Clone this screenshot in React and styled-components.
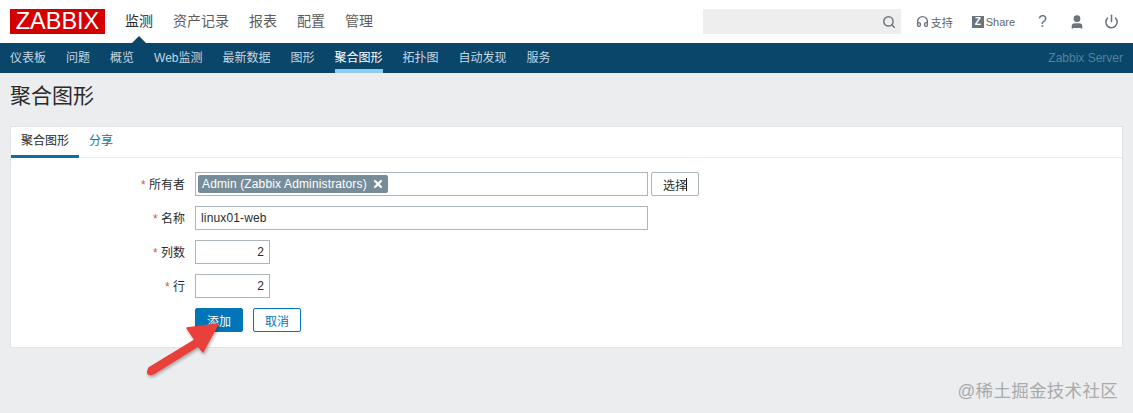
import React from 'react'
import styled, { createGlobalStyle } from 'styled-components'
import { Search, Headphones, User, Power, X } from 'lucide-react'

const cjk = `"Liberation Sans", "Noto Sans CJK SC", sans-serif`

const mainItems = ['监测', '资产记录', '报表', '配置', '管理']
const subItems = ['仪表板', '问题', '概览', 'Web监测', '最新数据', '图形', '聚合图形', '拓扑图', '自动发现', '服务']

const App = () => {
    return (
    <Page>
        <GlobalStyle />
        <TopBar>
            <Logo>ZABBIX</Logo>
            <MainNav>
                {mainItems.map((item, i) => <MainLink key={item} $active={i === 0}>{item}</MainLink>)}
            </MainNav>
            <SearchBox>
                <Search size={14} color="#6f7a80" strokeWidth={2.6} />
            </SearchBox>
            <TopLink $left={15}><Headphones size={13} color="#68757c" strokeWidth={2.6} />支持</TopLink>
            <TopLink $left={19}><ShareMark>Z</ShareMark>Share</TopLink>
            <IconSlot $left={23} $color="#68757c">?</IconSlot>
            <IconSlot $left={22}><User size={16} color="#68757c" fill="#68757c" /></IconSlot>
            <IconSlot $left={19}><Power size={15} color="#68757c" strokeWidth={2.4} /></IconSlot>
        </TopBar>
        <SubBar>
            {subItems.map(item => <SubLink key={item} $active={item === '聚合图形'}>{item}</SubLink>)}
            <ServerName>Zabbix Server</ServerName>
        </SubBar>
        <Heading>聚合图形</Heading>
        <Card>
            <Tabs>
                <Tab $active>聚合图形</Tab>
                <Tab>分享</Tab>
            </Tabs>
            <Form>
                <Row>
                    <Label><Star>*</Star> 所有者</Label>
                    <MultiSelect>
                        <Tag>Admin (Zabbix Administrators)<X size={12} color="#fff" strokeWidth={4.5} /></Tag>
                    </MultiSelect>
                    <SelectButton>选择<Caret /></SelectButton>
                </Row>
                <Row>
                    <Label><Star>*</Star> 名称</Label>
                    <TextField>linux01-web</TextField>
                </Row>
                <Row>
                    <Label><Star>*</Star> 列数</Label>
                    <NumberField>2</NumberField>
                </Row>
                <Row>
                    <Label><Star>*</Star> 行</Label>
                    <NumberField>2</NumberField>
                </Row>
                <Row>
                    <Label />
                    <AddButton>添加</AddButton>
                    <CancelButton>取消</CancelButton>
                </Row>
            </Form>
        </Card>
        <Arrow width="90" height="70" viewBox="0 0 90 70">
            <defs>
                <filter id="arrowShadow" x="-20%" y="-20%" width="150%" height="150%">
                    <feDropShadow dx="1" dy="2" stdDeviation="1.5" floodColor="#000" floodOpacity="0.3" />
                </filter>
            </defs>
            <path d="M7 50 L53 22 L45 10 L76 6 L61 34 L56 28 L11 56 Q3 58 7 50 Z" fill="#e8403a" stroke="#e8403a" strokeWidth="1.5" strokeLinejoin="round" filter="url(#arrowShadow)" />
        </Arrow>
        <Watermark>@稀土掘金技术社区</Watermark>
    </Page>
    )
}

export default App

const GlobalStyle = createGlobalStyle`
    html, body {
        margin: 0;
        padding: 0;
        background: #ebedef;
    }
    body {
        font-family: ${cjk};
    }
`

const Page = styled.div`
    position: relative;
    width: 1133px;
    height: 413px;
    overflow: hidden;
    background: #ebedef;
`

const TopBar = styled.div`
    display: flex;
    align-items: center;
    height: 43px;
    padding: 0 14px 0 10px;
    box-sizing: border-box;
    background: #fff;
`

const Logo = styled.div`
    width: 95px;
    height: 25px;
    box-sizing: border-box;
    background: #d40000;
    color: #fff;
    font-size: 23.5px;
    line-height: 25px;
    text-align: center;
`

const MainNav = styled.nav`
    display: flex;
    gap: 20px;
    margin-left: 20px;
    flex: 1;
`

const MainLink = styled.span`
    position: relative;
    font-size: 14px;
    line-height: 43px;
    color: ${p => (p.$active ? '#2b2b2b' : '#5c5c5c')};
    ${p => p.$active && `
        &::after {
            content: '';
            position: absolute;
            left: 50%;
            bottom: 0;
            margin-left: -7px;
            border: 7px solid transparent;
            border-top: 0;
            border-bottom-color: #0a466a;
        }
    `}
`

const SearchBox = styled.div`
    display: flex;
    align-items: center;
    justify-content: flex-end;
    width: 198px;
    height: 25px;
    padding-right: 5px;
    box-sizing: border-box;
    background: #eeeeee;
`

const TopLink = styled.span`
    display: flex;
    align-items: center;
    gap: 2px;
    margin-left: ${p => p.$left}px;
    font-size: 11px;
    color: #5c666b;
`

const ShareMark = styled.span`
    display: inline-block;
    width: 12px;
    height: 12px;
    background: #68757c;
    color: #fff;
    font-size: 10px;
    font-weight: bold;
    line-height: 12px;
    text-align: center;
`

const IconSlot = styled.span`
    display: flex;
    align-items: center;
    margin-left: ${p => p.$left}px;
    font-size: 16px;
    color: ${p => p.$color || 'inherit'};
`

const SubBar = styled.div`
    display: flex;
    gap: 20px;
    height: 30px;
    padding: 0 10px;
    box-sizing: border-box;
    background: #0a466a;
`

const SubLink = styled.span`
    height: 30px;
    box-sizing: border-box;
    font-size: 12px;
    line-height: 30px;
    color: ${p => (p.$active ? '#ffffff' : '#c4d6e2')};
    border-bottom: ${p => (p.$active ? '4px solid #8fcdee' : 'none')};
`

const ServerName = styled.span`
    margin-left: auto;
    font-size: 12px;
    line-height: 30px;
    color: #54829f;
`

const Heading = styled.h1`
    margin: 0;
    padding: 0 10px;
    height: 53px;
    font-size: 21px;
    font-weight: normal;
    line-height: 46px;
    color: #2b2b2b;
`

const Card = styled.div`
    width: 1113px;
    height: 222px;
    margin-left: 10px;
    box-sizing: border-box;
    background: #fff;
    border: 1px solid #dfe4e7;
`

const Tabs = styled.div`
    display: flex;
    height: 31px;
    box-sizing: border-box;
    border-bottom: 1px solid #ebedef;
`

const Tab = styled.div`
    height: 31px;
    padding: 0 10px;
    box-sizing: border-box;
    font-size: 12px;
    line-height: 28px;
    color: ${p => (p.$active ? '#2b2b2b' : '#0b7a9e')};
    border-bottom: ${p => (p.$active ? '3px solid #0b6ea6' : 'none')};
`

const Form = styled.div`
    display: flex;
    flex-direction: column;
    gap: 10px;
    padding-top: 14px;
`

const Row = styled.div`
    display: flex;
    align-items: center;
    gap: 3px;
    height: 24px;
`

const Label = styled.label`
    width: 174px;
    margin-right: 7px;
    padding-bottom: 2px;
    font-size: 12px;
    text-align: right;
    color: #2b2b2b;
`

const Star = styled.span`
    color: #d9534f;
`

const fieldBorder = '1px solid #acb5b9'

const MultiSelect = styled.div`
    display: flex;
    align-items: center;
    width: 453px;
    height: 24px;
    padding-left: 2px;
    box-sizing: border-box;
    border: ${fieldBorder};
    background: #fff;
`

const Tag = styled.span`
    display: flex;
    align-items: center;
    gap: 5px;
    height: 18px;
    padding: 0 4px;
    border-radius: 2px;
    background: #768d99;
    color: #fff;
    font-size: 12px;
    letter-spacing: 0.14px;
`

const SelectButton = styled.button`
    position: relative;
    width: 48px;
    height: 24px;
    padding: 0;
    box-sizing: border-box;
    font-family: ${cjk};
    font-size: 12px;
    color: #2b2b2b;
    background: #fff;
    border: ${fieldBorder};
    border-radius: 2px;
`

const Caret = styled.span`
    position: absolute;
    top: 5px;
    right: 11px;
    width: 1px;
    height: 13px;
    background: #1f1f1f;
`

const TextField = styled.div`
    width: 453px;
    height: 24px;
    padding: 0 5px;
    box-sizing: border-box;
    font-size: 12px;
    line-height: 22px;
    letter-spacing: 0.15px;
    color: #2b2b2b;
    border: ${fieldBorder};
`

const NumberField = styled(TextField)`
    width: 75px;
    text-align: right;
`

const AddButton = styled.button`
    width: 48px;
    height: 24px;
    padding: 0;
    font-family: ${cjk};
    font-size: 12px;
    color: #fff;
    background: #0275b8;
    border: 1px solid #0275b8;
    border-radius: 2px;
`

const CancelButton = styled(AddButton)`
    margin-left: 7px;
    color: #0275b8;
    background: #fff;
`

const Arrow = styled.svg`
    position: absolute;
    left: 142px;
    top: 318px;
`

const Watermark = styled.div`
    position: absolute;
    right: 15px;
    top: 380px;
    font-size: 17.5px;
    line-height: 22px;
    letter-spacing: 0.3px;
    color: #a8aaac;
`
